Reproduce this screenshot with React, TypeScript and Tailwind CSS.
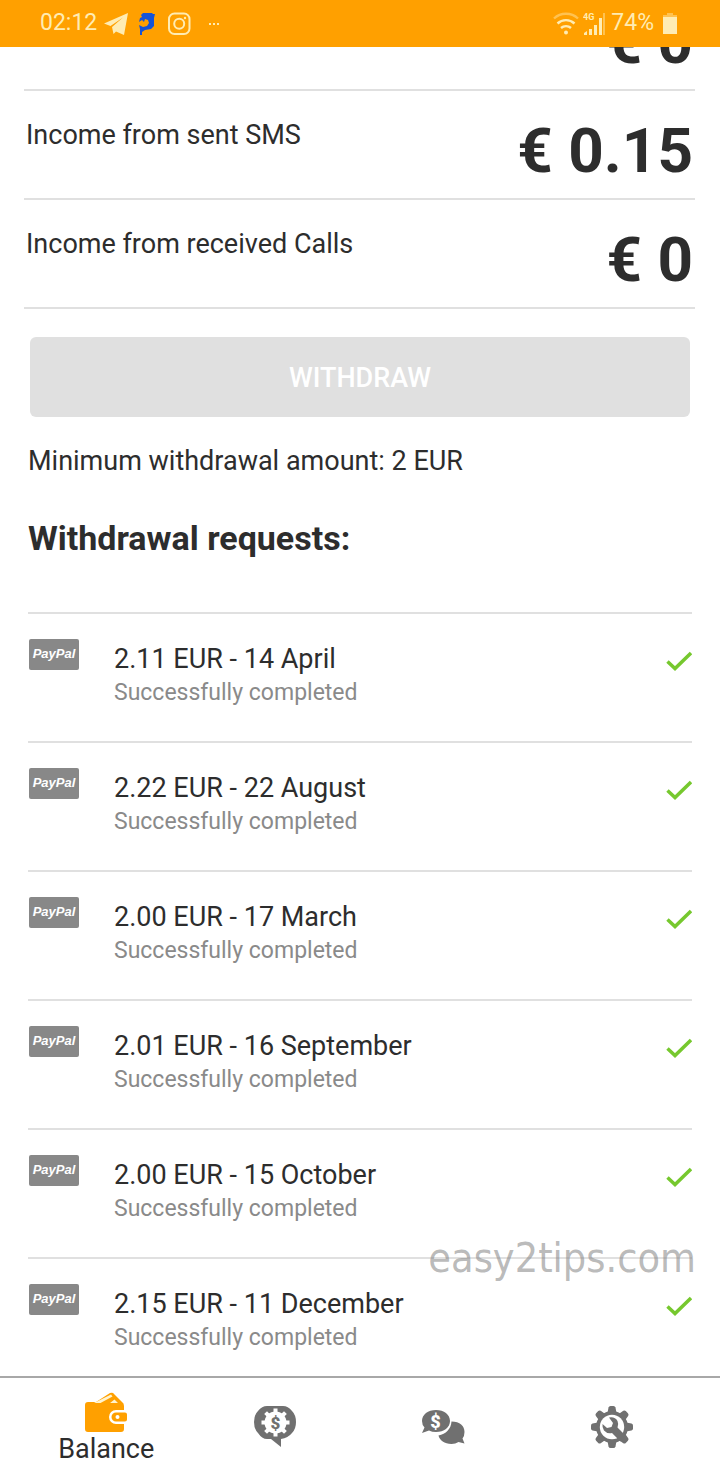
import React from 'react';

const INCOME = [
  { label: 'Income from sent SMS', value: '€ 0.15' },
  { label: 'Income from received Calls', value: '€ 0' },
];

const REQUESTS = [
  { amount: '2.11 EUR', date: '14 April' },
  { amount: '2.22 EUR', date: '22 August' },
  { amount: '2.00 EUR', date: '17 March' },
  { amount: '2.01 EUR', date: '16 September' },
  { amount: '2.00 EUR', date: '15 October' },
  { amount: '2.15 EUR', date: '11 December' },
];

const TEETH = [0, 45, 90, 135, 180, 225, 270, 315];

const StatusBar: React.FC = () => (
  <header className="flex h-[47px] shrink-0 items-center justify-between bg-[#ffa000] pl-10 pr-[42px] text-[23px] text-[#ffecb3]">
    <div className="flex items-center">
      <span>02:12</span>
      <svg className="ml-1.5 h-6 w-[26px]" viewBox="0 0 26 24" fill="currentColor">
        <path d="M1 11.500 25 1l-4 22-8-3.500-2.500 2.500-1.500-7L20 5.500 7.500 14Z" />
      </svg>
      <svg className="ml-2.5 h-[22px] w-4" viewBox="0 0 16 22" fill="#1553d6">
        <path d="M2 2 4 0h9l1 1h2l-1 4v8l-3 3-6 1-3 2v3H1v-6L0 12l4 2 4-1 2-3-1-3-3-1-1 3-2-2-3 2 1-4 2-1Z" />
      </svg>
      <svg className="ml-3 h-6 w-6" viewBox="0 0 24 24" fill="none" stroke="currentColor" strokeWidth="2">
        <rect x="2" y="1.5" width="20.5" height="20.5" rx="5.5" />
        <circle cx="12.2" cy="11.8" r="5" />
        <circle cx="18" cy="6" r="1.2" fill="currentColor" stroke="none" />
      </svg>
      <svg className="ml-4 h-1 w-3" viewBox="0 0 12 4" fill="currentColor">
        <rect x="2" y="1" width="2" height="2" />
        <rect x="6" y="1" width="2" height="2" />
        <rect x="10" y="1" width="2" height="2" />
      </svg>
    </div>
    <div className="flex items-center">
      <svg className="h-6 w-[26px]" viewBox="0 0 26 24" fill="none" stroke="currentColor" strokeWidth="2.4">
        <path d="M1 6.500a17.500 17.500 0 0 1 24 0" opacity=".45" />
        <path d="M4.500 11.500a12.500 12.500 0 0 1 17 0" />
        <path d="M8 16a7.500 7.500 0 0 1 10 0" />
        <circle cx="13" cy="20.500" r="2" fill="currentColor" stroke="none" />
      </svg>
      <svg className="ml-1 h-6 w-6" viewBox="0 0 24 24" fill="currentColor">
        <text x="0" y="8" fontSize="9" fontWeight="700">4G</text>
        <path d="M1 23v-2l3-2v4ZM6 17h3v6H6ZM11 13h3v10h-3ZM16 6h3v17h-3Z" />
        <path d="M20 1h2v22h-2Z" opacity=".45" />
      </svg>
      <span className="ml-1">74%</span>
      <svg className="ml-2 h-6 w-4" viewBox="0 0 16 24" fill="currentColor">
        <path d="M1 5V3h4V1h6v2h4v2Z" opacity=".45" />
        <path d="M1 5h14v17H1Z" />
      </svg>
    </div>
  </header>
);

const WalletIcon = () => (
  <svg className="h-10 w-[42px]" viewBox="0 0 42 40" fill="#ffa000">
    <path d="M3 10h8L25 1q3-1 4 1l8 8q2 1 2 4v4H31a7 7 0 0 0 0 14h8v5q0 3-3 3H3q-3 0-3-3V13q0-3 3-3Z" />
    <path d="M9 11 26 2.500l1.500 2-12 6.500ZM25 11l4.500-3.500 3.500 3.500Z" fill="#fff4cf" />
    <path d="M31 20.500h9q2 0 2 2v5q0 2-2 2h-9a4.500 4.500 0 0 1 0-9Z" />
    <circle cx="32.500" cy="25" r="2" fill="#fff" />
  </svg>
);

const ServiceIcon = () => (
  <svg className="h-[42px] w-[42px]" viewBox="0 0 42 42" fill="#707070">
    <path d="M13 0h16q5 0 9 5 4 4 4 11t-4 11q-4 5-11 6v8l-10-8h-4q-5 0-9-6-4-4-4-11T4 5q4-5 9-5Z" />
    <g transform="translate(21.500 16.500)" fill="#fff">
      <circle r="11" />
      {TEETH.map((a) => (
        <rect key={a} x="-2" y="-14" width="4" height="5" transform={`rotate(${a})`} />
      ))}
    </g>
    <text x="21.500" y="22.500" fontSize="17" fontWeight="900" textAnchor="middle">$</text>
  </svg>
);

const ChatsIcon = () => (
  <svg className="h-[35px] w-[43px]" viewBox="0 0 43 35" fill="#707070">
    <path d="M29.500 11.500C38 11.500 42.500 16 42.500 22q0 4-2 6.500l2 5-6-1.500q-3 2-7 2c-7 0-12-4-13-8.500C24 24 29 19 29.500 11.500Z" />
    <path d="M14 0c8 0 14 4.500 14 11s-6 11-14 11q-4 0-7-1.500L0 23l2.500-5.500Q0 15 0 11C0 4.500 6 0 14 0Z" />
    <text x="13.500" y="17.500" fontSize="18" fontWeight="900" textAnchor="middle" fill="#fff">$</text>
  </svg>
);

const SettingsIcon = () => (
  <svg className="h-[42px] w-[42px]" viewBox="-21 -21 42 42" fill="#707070">
    <circle r="16" />
    {TEETH.map((a) => (
      <path key={a} d="M-4.500-14l1-5.500q.5-1.500 2-1.500h3q1.500 0 2 1.500l1 5.500Z" transform={`rotate(${a})`} />
    ))}
    <circle r="12.200" fill="#fff" />
    <path d="M-3-9.500Q3-10.500 5.500-6 7-2.500 5.500.5L14 9l-5.500 5.500L0 6Q-5 7-8 3.500-10 .5-9.500-3L-5 1l4.500-1L1-4Z" />
  </svg>
);

const TABS = [
  { name: 'Balance', icon: WalletIcon, active: true },
  { name: 'Services', icon: ServiceIcon, active: false },
  { name: 'Messages', icon: ChatsIcon, active: false },
  { name: 'Settings', icon: SettingsIcon, active: false },
];

const TabBar: React.FC = () => (
  <nav className="grid h-[100px] shrink-0 grid-cols-4 border-t-2 border-[#a8a8a8] bg-white pl-[22px] pr-6">
    {TABS.map((tab) => (
      <button
        key={tab.name}
        type="button"
        aria-label={tab.name}
        className={tab.active ? 'flex flex-col items-center pt-3.5' : 'flex flex-col items-center justify-center'}
      >
        <tab.icon />
        {tab.active && <span className="text-[27px] leading-[34px]">{tab.name}</span>}
      </button>
    ))}
  </nav>
);

export default function App() {
  return (
    <div className="relative flex h-screen flex-col overflow-hidden bg-white font-['Roboto',sans-serif] text-[#2d2d2d]">
      <StatusBar />
      <main className="flex-1 overflow-hidden">
        <section className="pl-6 pr-[25px]">
          {/* scrolled half way under the status bar */}
          <div className="flex h-11 items-end justify-end overflow-hidden border-b-2 border-[#e0e0e0] pr-0.5">
            <span className="pb-[11px] text-[62px] font-bold leading-[72px]">€ 0</span>
          </div>
          {INCOME.map((row) => (
            <div key={row.label} className="flex h-[109px] justify-between border-b-2 border-[#e0e0e0] pl-0.5 pr-0.5">
              <span className="pt-7 text-[27px] leading-8">{row.label}</span>
              <span className="pt-6 text-[62px] font-bold leading-[72px]">{row.value}</span>
            </div>
          ))}
        </section>

        <section className="px-7">
          <div className="px-0.5 pt-7">
            <button type="button" disabled className="h-20 w-full rounded-md bg-[#e0e0e0] pt-0.5 text-[27px] font-medium text-white">
              WITHDRAW
            </button>
          </div>
          <p className="mt-7 text-[27px] leading-8">Minimum withdrawal amount: 2 EUR</p>
          <h2 className="mt-10 text-[34px] font-bold leading-[42px]">Withdrawal requests:</h2>

          <ul className="mt-[53px]">
            {REQUESTS.map((req) => (
              <li key={req.date} className="flex h-[129px] border-t-2 border-[#e0e0e0] pl-px pt-[25px]">
                <span className="flex h-[31px] w-[50px] items-center justify-center rounded-xs bg-[#888888] pb-0.5 font-['Liberation_Sans',sans-serif] text-[13px] font-bold italic text-white">
                  PayPal
                </span>
                <div className="ml-[35px] flex-1 pt-1">
                  <div className="text-[27px] leading-8">{req.amount} - {req.date}</div>
                  <div className="text-[23px] leading-9 text-[#8a8a8a]">Successfully completed</div>
                </div>
                <svg className="mt-3 h-5 w-[26px]" viewBox="0 0 26 20" fill="none" stroke="#76c82e" strokeWidth="3.5">
                  <path d="m1.500 10.500 7.500 7L25 2" />
                </svg>
              </li>
            ))}
          </ul>
        </section>
      </main>
      <TabBar />
      <div className="pointer-events-none absolute bottom-[192px] right-6 font-['DejaVu_Sans_Condensed','DejaVu_Sans',sans-serif] text-[41px] leading-[52px] text-[#808080]/55">
        easy2tips.com
      </div>
    </div>
  );
}
